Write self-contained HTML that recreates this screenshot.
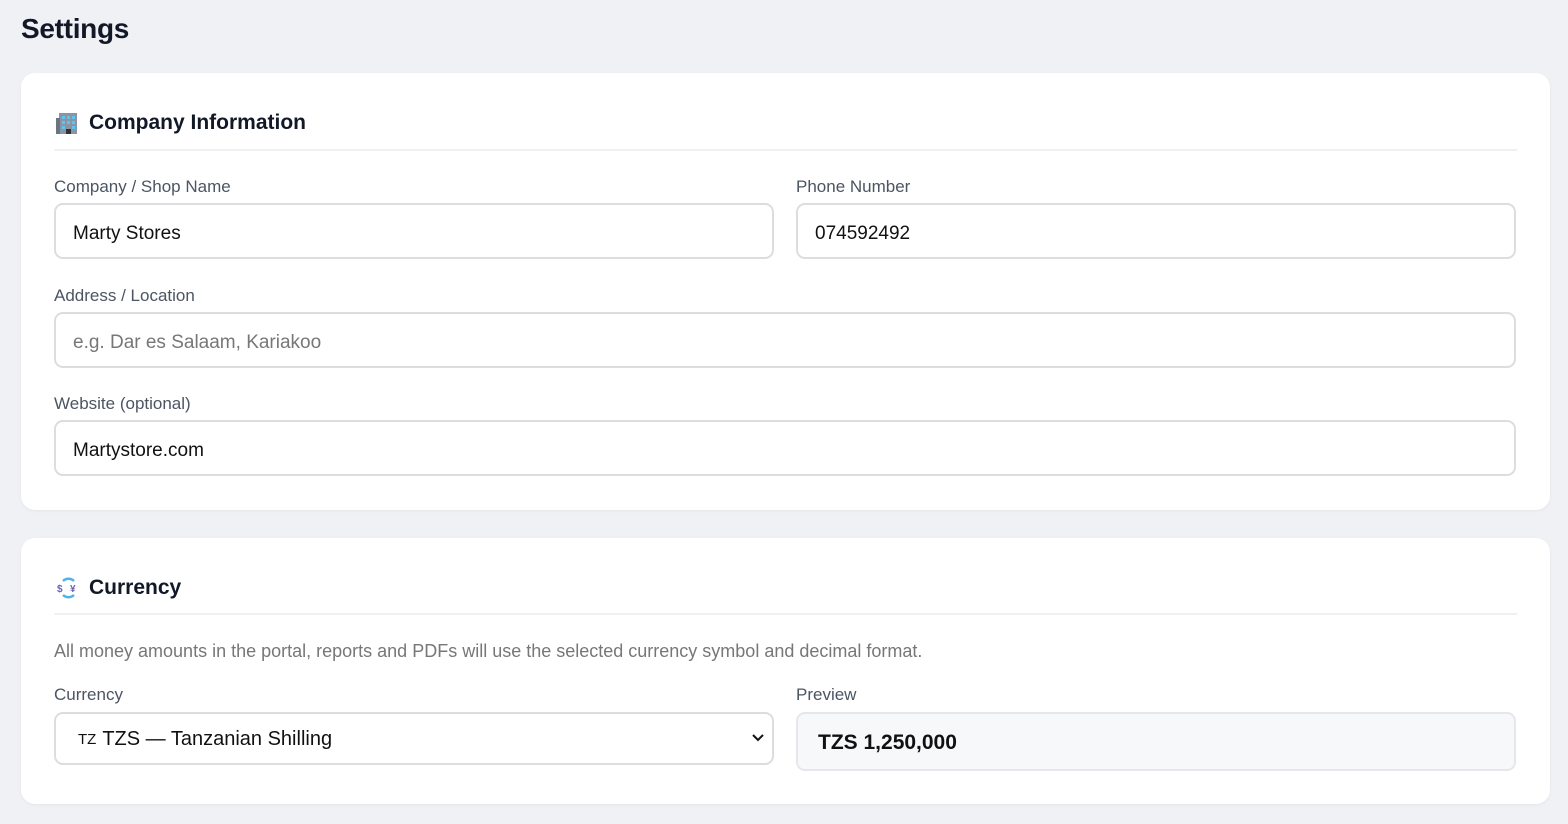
<!DOCTYPE html>
<html><head><style>
*{box-sizing:border-box;margin:0;padding:0}
body{width:1568px;height:824px;background:#f0f1f5;font-family:"Liberation Sans","DejaVu Sans",sans-serif;color:#111827;overflow:hidden}
h1{position:absolute;left:21px;top:13px;font-size:28px;font-weight:bold;color:#111827;letter-spacing:-0.3px}
.card{position:absolute;left:21px;width:1529px;background:#fff;border-radius:14px;box-shadow:0 1px 3px rgba(0,0,0,0.05)}
.ct{position:absolute;left:35px;font-size:21px;font-weight:bold;display:flex;align-items:center;gap:9px}
.hr{position:absolute;left:33px;right:33px;height:2px;background:#eef0f3}
.lbl{position:absolute;font-size:17px;color:#4b5563}
.inp{position:absolute;border:2px solid #dcdde0;border-radius:9px;font-size:19px;padding-left:17px;padding-top:5px;display:flex;align-items:center;color:#111}
</style></head><body>
<h1>Settings</h1>
<div class="card" style="top:73px;height:437px">
<div class="ct" style="top:38px"><svg width="24" height="22" viewBox="0 0 24 22"><rect x="3" y="1" width="18" height="21" fill="#8a94a3"/><rect x="0" y="6" width="4" height="16" fill="#6b7482"/><g fill="#5fc3f0"><rect x="6" y="4" width="3" height="3"/><rect x="11" y="4" width="3" height="3"/><rect x="16" y="4" width="3" height="3"/><rect x="6" y="9" width="3" height="3"/><rect x="11" y="9" width="3" height="3"/><rect x="16" y="9" width="3" height="3"/><rect x="6" y="14" width="3" height="3"/><rect x="16" y="14" width="3" height="3"/></g><rect x="10" y="17" width="5" height="5" fill="#333"/></svg>Company Information</div>
<div class="hr" style="top:76px"></div>
<div class="lbl" style="left:33px;top:104px">Company / Shop Name</div>
<div class="inp" style="left:33px;top:130px;width:720px;height:56px">Marty Stores</div>
<div class="lbl" style="left:775px;top:104px">Phone Number</div>
<div class="inp" style="left:775px;top:130px;width:720px;height:56px">074592492</div>
<div class="lbl" style="left:33px;top:213px">Address / Location</div>
<div class="inp" style="left:33px;top:239px;width:1462px;height:56px;color:#777">e.g. Dar es Salaam, Kariakoo</div>
<div class="lbl" style="left:33px;top:321px">Website (optional)</div>
<div class="inp" style="left:33px;top:347px;width:1462px;height:56px">Martystore.com</div>
</div>
<div class="card" style="top:538px;height:266px">
<div class="ct" style="top:38px"><svg width="24" height="22" viewBox="0 0 24 22"><text x="1" y="15" font-size="10" fill="#6b5fb5" font-family="Liberation Sans">$</text><text x="14" y="15" font-size="10" fill="#6b5fb5" font-family="Liberation Sans">¥</text><path d="M7 4 A8 8 0 0 1 18 4" stroke="#4fb3e8" stroke-width="2.5" fill="none"/><path d="M18 18 A8 8 0 0 1 7 18" stroke="#4fb3e8" stroke-width="2.5" fill="none"/></svg>Currency</div>
<div class="hr" style="top:75px"></div>
<div class="lbl" style="left:33px;top:103px;color:#777;font-size:18px">All money amounts in the portal, reports and PDFs will use the selected currency symbol and decimal format.</div>
<div class="lbl" style="left:33px;top:147px">Currency</div>
<div class="inp" style="left:33px;top:174px;width:720px;height:53px;padding-left:22px;padding-top:2px;font-size:20px"><span style="font-size:15px;margin-right:6px">TZ</span>TZS — Tanzanian Shilling<svg style="position:absolute;right:8px;top:20px" width="12" height="8" viewBox="0 0 12 8"><path d="M1 1l5 5 5-5" stroke="#111" stroke-width="2" fill="none"/></svg></div>
<div class="lbl" style="left:775px;top:147px">Preview</div>
<div class="inp" style="left:775px;top:174px;width:720px;height:59px;background:#f7f8fa;border-color:#e5e7eb;font-weight:bold;font-size:21px;padding-left:20px;padding-top:3px">TZS 1,250,000</div>
</div>
</body></html>
